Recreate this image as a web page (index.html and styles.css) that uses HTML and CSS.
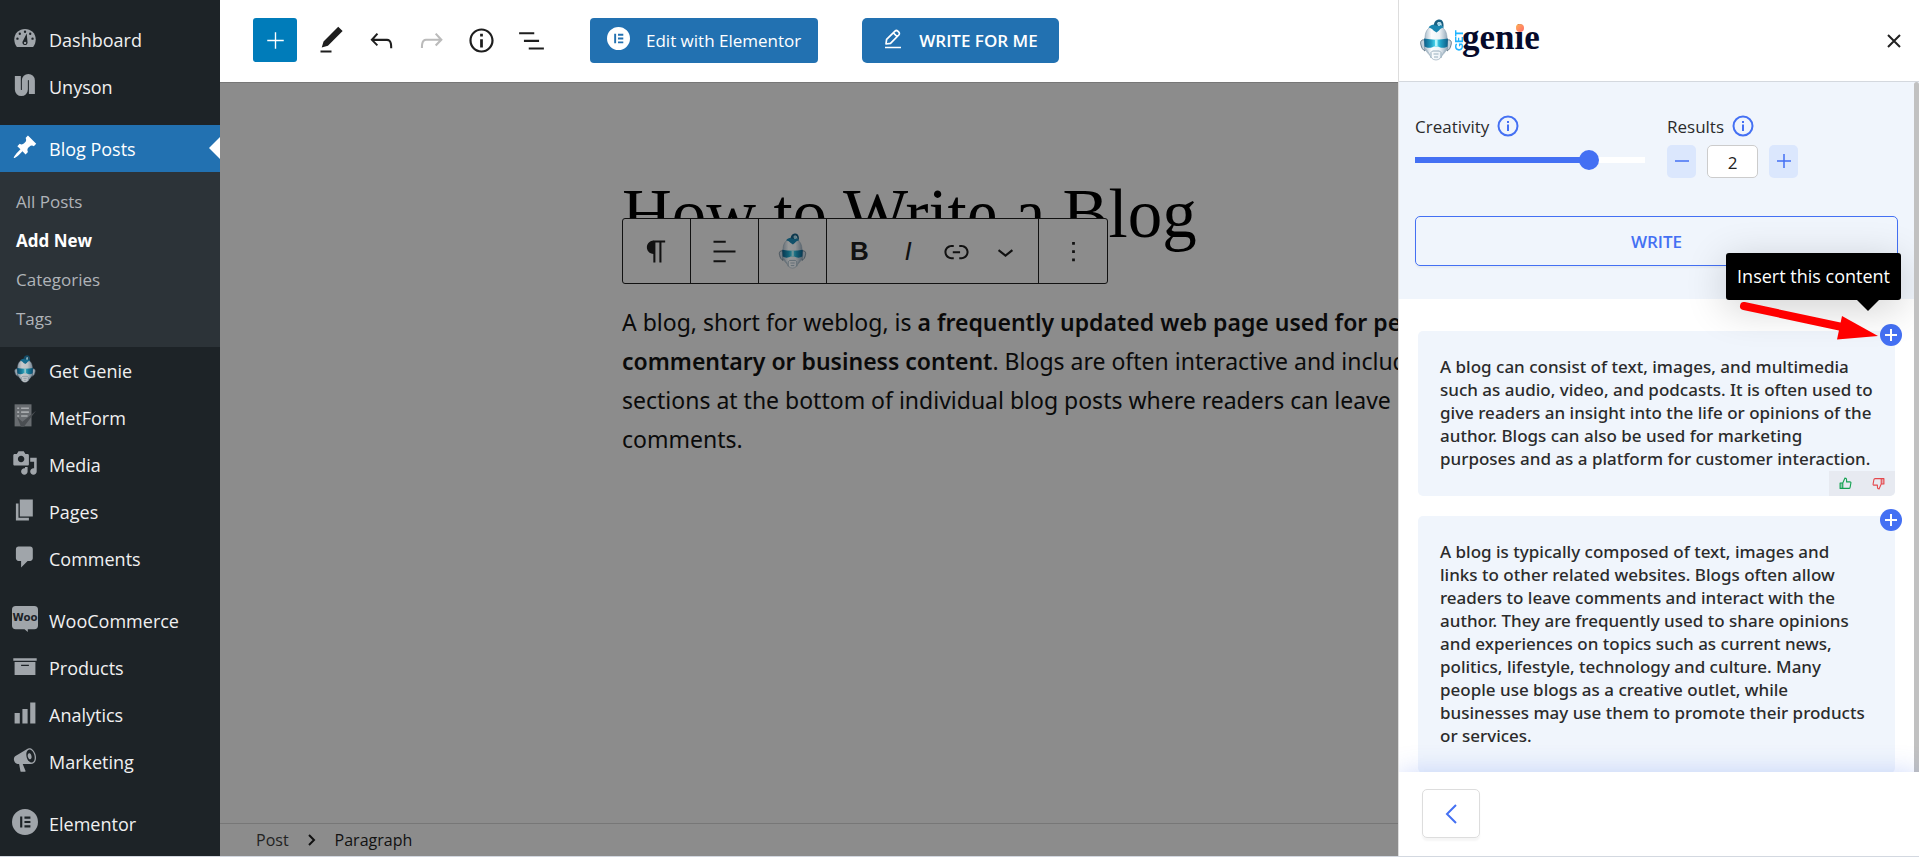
FILE: index.html
```html
<!DOCTYPE html>
<html lang="en">
<head>
<meta charset="utf-8">
<title>Add New Post</title>
<link rel="stylesheet" href="styles.css">
</head>
<body>
<svg class="defs" aria-hidden="true">
  <defs>
    <linearGradient id="visor" x1="0" x2="1" y1="0" y2="0">
      <stop offset="0" stop-color="#0d5c86"/><stop offset=".3" stop-color="#1f9fc4"/><stop offset=".5" stop-color="#4fe0f5"/><stop offset=".7" stop-color="#1f9fc4"/><stop offset="1" stop-color="#0d5c86"/>
    </linearGradient>
    <linearGradient id="skin" x1="0" x2="1" y1="0" y2="0">
      <stop offset="0" stop-color="#a9bccb"/><stop offset=".3" stop-color="#fafcfd"/><stop offset=".65" stop-color="#eef3f7"/><stop offset="1" stop-color="#93a9ba"/>
    </linearGradient>
    <linearGradient id="spark" x1="0" x2="1" y1="0" y2="1">
      <stop offset="0" stop-color="#ffb056"/><stop offset="1" stop-color="#ff6a6a"/>
    </linearGradient>
    <symbol id="head" viewBox="0 0 32 42">
      <path d="M5 21C1 20 0 23 1 26c.5 3 2 5 4 6zM27 21c4-1 5 2 4 5-.5 3-2 5-4 6z" fill="#c3d1dc" stroke="#5d7485" stroke-width=".9"/>
      <path d="M16 7C9 7 5.500 11 5 18l-.5 9c.5 4 2.500 6.500 5 9 1.500 2.500 3 5 6.500 5s5-2.500 6.500-5c2.500-2.500 4.500-5 5-9L27 18C26.500 11 23 7 16 7z" fill="url(#skin)" stroke="#8ba0b0" stroke-width=".6"/>
      <path d="M8.500 8.500C10 6 13 5.500 16 5.500s6.500.5 8 3c-3 .5-4 1.500-5 3l-2.500 2-3-2c-1-1.500-2.500-2.500-5-3z" fill="#1a86b0"/>
      <path d="M14 6C14 2 17 .5 19.500.5 22.500.5 24 4 23.500 8l-2-1.500C22 4 20.500 3 19 3c-2 0-2 2-1 4z" fill="#175f82"/>
      <path d="M17.500 4.500c1-2 3-1.500 3.500 0l-1 2.500h-2z" fill="#9fd6ea"/>
      <path d="M4 19.500c8 1.500 16 1.500 24 0l-.5 8c-3 2-7 1.500-9.500 0h-4c-2.500 1.500-6.500 2-9.500 0z" fill="url(#visor)"/>
      <path d="M15 20.500h2.500v6.500H15z" fill="#b5f5fb"/>
      <path d="M11 39v-5.500l1.500-1.500h7l1.500 1.500V39M13.500 35h5M14 38h4" fill="none" stroke="#8da5b5" stroke-width=".9"/>
      <path d="M6 30l4 6M26 30l-4 6" stroke="#a3b5c3" stroke-width=".9" fill="none"/>
    </symbol>
    <symbol id="elementor" viewBox="0 0 24 24">
      <path fill-rule="evenodd" fill="currentColor" d="M12 0a12 12 0 1 0 0 24 12 12 0 0 0 0-24zM7.500 7h2v10h-2zM11.500 7h5.500v2h-5.500zM11.500 11h5.500v2h-5.500zM11.500 15h5.500v2h-5.500z"/>
    </symbol>
    <symbol id="info" viewBox="0 0 22 22">
      <circle cx="11" cy="11" r="9.500" fill="none" stroke="currentColor" stroke-width="2"/>
      <path d="M10 9.500h2v6.500h-2zM10 6h2v2h-2z" fill="currentColor"/>
    </symbol>
    <symbol id="thumb" viewBox="0 0 24 24">
      <path d="M2 11h5v10H2z" fill="currentColor" fill-opacity=".4"/>
      <path d="M7 11l4-9c2 0 3 1 3 3v4h6c1.500 0 2.200 1 2 2l-1.500 8c-.2 1.200-1 2-2.200 2H2V11h5zM7 11v10" fill="none" stroke="currentColor" stroke-width="2" stroke-linejoin="round"/>
    </symbol>
  </defs>
</svg>

<div class="app">
  <nav class="sidebar" aria-label="Main menu">
    <ul class="menu">
      <li><a class="item" href="#"><svg class="ico" viewBox="0 0 20 20"><path d="M3.760 17h12.480c1.340-1.630 2.010-3.820 2.010-6 0-4.800-3.800-8-8.250-8s-8.250 3.200-8.250 8c0 2.180.67 4.370 2.010 6z" fill="currentColor"/><g fill="#1d2327"><circle cx="10" cy="5.200" r=".9"/><circle cx="6" cy="6.700" r=".9"/><circle cx="14" cy="6.700" r=".9"/><circle cx="4.200" cy="10.500" r=".9"/><circle cx="15.800" cy="10.500" r=".9"/><path d="M11.300 6.500l.6 6.300a2 2 0 1 1-3.400-.7zM10 12.800a.9.900 0 1 0 .1 0z" fill-rule="evenodd"/></g></svg>Dashboard</a></li>
      <li><a class="item" href="#"><svg class="ico" viewBox="0 0 20 20"><path d="M4.500 3v10.500a2.700 2.700 0 0 0 5.400 0v-7a2.700 2.700 0 0 1 5.400 0V17" fill="none" stroke="currentColor" stroke-width="4.600"/></svg>Unyson</a></li>
      <li class="group"><a class="item current" href="#" aria-current="page"><svg class="ico" viewBox="0 0 20 20"><path fill="currentColor" d="M10.440 3.020l1.820-1.820 6.360 6.350-1.830 1.820c-1.050-.68-2.480-.57-3.410.36l-.75.75c-.92.93-1.040 2.350-.35 3.410l-1.830 1.820-2.410-2.410-2.800 2.790c-.42.42-3.380 2.710-3.800 2.290s1.860-3.390 2.280-3.810l2.790-2.790L4.100 9.360l1.830-1.820c1.050.69 2.480.57 3.400-.36l.75-.75c.93-.92 1.050-2.350.36-3.410z"/></svg>Blog Posts</a>
        <ul class="submenu">
          <li><a href="#">All Posts</a></li>
          <li><a class="active" href="#">Add New</a></li>
          <li><a href="#">Categories</a></li>
          <li><a href="#">Tags</a></li>
        </ul>
      </li>
      <li><a class="item" href="#"><svg class="ico genie-dim"><use href="#head"/></svg>Get Genie</a></li>
      <li><a class="item" href="#"><svg class="ico" viewBox="0 0 20 20"><path d="M2 1h13v17H2z" fill="#686c70"/><path d="M4 4h1.500M7 4h6M4 7h1.500M7 7h6M4 10h1.500M7 10h5" stroke="#a7aaad" stroke-width="1.200"/><path d="M4 11l4 3.500L18.500 6 9 18.500H7z" fill="#4a4e52"/></svg>MetForm</a></li>
      <li><a class="item" href="#"><svg class="ico" viewBox="0 0 20 20"><path fill="currentColor" d="M13 11V4c0-.55-.45-1-1-1h-1.670L9 1H5L3.670 3H2c-.55 0-1 .45-1 1v7c0 .55.45 1 1 1h10c.55 0 1-.45 1-1zM7 4.500c1.380 0 2.500 1.120 2.500 2.500S8.380 9.500 7 9.500 4.500 8.380 4.500 7 5.620 4.500 7 4.500zM14 6h5v10.500c0 1.380-1.120 2.500-2.500 2.500S14 17.880 14 16.500s1.120-2.500 2.500-2.500c.17 0 .34.02.5.050V9h-3V6zm-4 8.050V13h2v3.500c0 1.380-1.120 2.500-2.500 2.500S7 17.880 7 16.500 8.120 14 9.500 14c.17 0 .34.02.5.050z"/></svg>Media</a></li>
      <li><a class="item" href="#"><svg class="ico" viewBox="0 0 20 20"><path fill="currentColor" d="M6 15V2h10v13H6zm-1 1h8v2H3V5h2v11z"/></svg>Pages</a></li>
      <li><a class="item" href="#"><svg class="ico" viewBox="0 0 20 20"><path fill="currentColor" d="M5 2h9c1.100 0 2 .9 2 2v7c0 1.100-.9 2-2 2h-2l-5 5v-5H5c-1.100 0-2-.9-2-2V4c0-1.100.9-2 2-2z"/></svg>Comments</a></li>
      <li class="group"><a class="item" href="#"><svg class="ico woo" viewBox="0 0 28 28"><path fill="currentColor" d="M4 0h20a4 4 0 0 1 4 4v17a4 4 0 0 1-4 4h-7v3l-3.500-3H4a4 4 0 0 1-4-4V4a4 4 0 0 1 4-4z"/><text x="14" y="16.500" class="woo-text">Woo</text></svg>WooCommerce</a></li>
      <li><a class="item" href="#"><svg class="ico" viewBox="0 0 20 20"><path fill="currentColor" d="M19 4v2H1V4h18zM2 7h16v10H2V7zm11 3V9H7v1h6z"/></svg>Products</a></li>
      <li><a class="item" href="#"><svg class="ico" viewBox="0 0 20 20"><path fill="currentColor" d="M18 18V2h-4v16h4zm-6 0V7H8v11h4zm-10 0h4v-8H2v8z"/></svg>Analytics</a></li>
      <li><a class="item" href="#"><svg class="ico" viewBox="0 0 20 20"><path fill="currentColor" d="M18.150 5.940c.46 1.620.38 3.220-.02 4.480-.42 1.280-1.260 2.180-2.300 2.480-.16.06-.26.06-.4.06-.06.02-.12.02-.18.02-.06.02-.14.02-.22.02h-6.800l2.220 5.500c.02.14-.06.26-.14.34-.08.1-.24.16-.34.16H6.950c-.1 0-.26-.06-.34-.16-.08-.08-.16-.2-.14-.34l-1-5.500H4.250l-.02-.02c-.5.06-1.080-.18-1.540-.62s-.88-1.080-1.060-1.880c-.24-.8-.2-1.560-.02-2.200.18-.62.58-1.080 1.060-1.300l.02-.02 9-5.400c.1-.06.18-.1.24-.16.06-.04.14-.08.24-.12.16-.08.28-.12.5-.18 1.040-.3 2.240.1 3.220.98s1.840 2.240 2.260 3.860zm-2.580 5.980h-.02c.4-.1.74-.34 1.040-.7.58-.7.86-1.760.86-3.040 0-.64-.1-1.300-.28-1.980-.34-1.360-1.020-2.500-1.780-3.240s-1.680-1.100-2.460-.88c-.82.22-1.400.96-1.700 2-.32 1.040-.28 2.360.06 3.720.38 1.360 1 2.500 1.800 3.240.78.74 1.620 1.100 2.480.88zm-2.540-7.080c.22-.04.42-.02.62.04.38.16.76.48 1.020 1s.42 1.200.42 1.780c0 .3-.04.56-.12.8-.18.48-.44.84-.86.94-.34.1-.8-.06-1.140-.4s-.64-.86-.78-1.500c-.18-.62-.12-1.240.02-1.720s.48-.84.82-.94z"/></svg>Marketing</a></li>
      <li class="group"><a class="item" href="#"><svg class="ico"><use href="#elementor"/></svg>Elementor</a></li>
    </ul>
  </nav>

  <main class="editor">
    <header class="topbar">
      <button class="add-block" aria-label="Add block"><svg viewBox="0 0 24 24"><path d="M11.500 12.500V18h1v-5.500H18v-1h-5.500V6h-1v5.500H6v1z"/></svg></button>
      <div class="tools">
        <button class="tool" aria-label="Tools"><svg viewBox="0 0 24 24"><path d="M20.100 5.100L16.900 2 6.200 12.700l-1.300 4.400 4.500-1.300L20.100 5.100zM4 20.800h8v-1.500H4v1.500z"/></svg></button>
        <button class="tool" aria-label="Undo"><svg viewBox="0 0 24 24"><path d="M18.300 11.700c-.6-.6-1.400-.9-2.300-.9H6.700l2.900-3.300-1.100-1-4.500 5L8.500 16l1-1-2.700-2.700H16c.5 0 .9.2 1.300.5 1 1 1 3.400 1 4.500v.3h1.500v-.2c0-1.500 0-4.300-1.500-5.700z"/></svg></button>
        <button class="tool" aria-label="Redo" disabled><svg viewBox="0 0 24 24"><path d="M15.600 6.500l-1.100 1 2.900 3.300H8c-.9 0-1.700.3-2.300.9-1.400 1.500-1.400 4.200-1.400 5.600v.2h1.500v-.3c0-1.100 0-3.500 1-4.500.3-.3.7-.5 1.300-.5h9.200L14.500 15l1.100 1.100 4.600-4.600-4.600-5z"/></svg></button>
        <button class="tool" aria-label="Details"><svg viewBox="0 0 24 24"><path d="M12 3.200c-4.800 0-8.800 3.900-8.800 8.800 0 4.800 3.900 8.800 8.800 8.800 4.800 0 8.800-3.900 8.800-8.800 0-4.800-4-8.800-8.800-8.800zm0 16c-4 0-7.200-3.300-7.200-7.200C4.800 8 8 4.800 12 4.800s7.200 3.300 7.200 7.200c0 4-3.200 7.200-7.200 7.200zM11 17h2v-6h-2v6zm0-8h2V7h-2v2z"/></svg></button>
        <button class="tool" aria-label="List view"><svg viewBox="0 0 24 24"><path d="M3 6h11v1.500H3V6zm3.500 5.500h11V13h-11v-1.500zM21 17H10v1.500h11V17z"/></svg></button>
      </div>
      <button class="primary"><svg class="el-logo"><use href="#elementor"/></svg>Edit with Elementor</button>
      <button class="primary write-me"><svg class="pen" viewBox="0 0 20 20"><path d="M3 15l.6-4.600L12 2.200c.8-.8 2-.8 2.800 0l1 1c.8.8.8 2 0 2.800l-8.300 8.400zM10.500 4l3.600 3.600M2 18.500h16" fill="none" stroke="currentColor" stroke-width="1.700" stroke-linejoin="round"/></svg>WRITE FOR ME</button>
    </header>

    <section class="canvas">
      <article class="post">
        <h1 class="title">How to Write a Blog</h1>
        <div class="block-bar" role="toolbar" aria-label="Block tools">
          <div class="seg"><button aria-label="Paragraph"><svg viewBox="0 0 24 24"><path d="M18.300 4H9.900v-.1l-.9.200c-2.300.4-4 2.400-4 4.800s1.700 4.400 4 4.800l.7.1V20h1.500V5.500h2.900V20h1.500V5.500h2.700V4z"/></svg></button></div>
          <div class="seg"><button aria-label="Align"><svg viewBox="0 0 24 24"><path d="M4 19.800h8.900v-1.500H4v1.500zm8.900-15.600H4v1.500h8.900V4.200zm-8.900 7v1.500h16v-1.500H4z"/></svg></button></div>
          <div class="seg"><button aria-label="Genie"><svg class="genie-shade"><use href="#head"/></svg></button></div>
          <div class="seg wide">
            <button class="bold">B</button>
            <button class="italic">I</button>
            <button aria-label="Link"><svg viewBox="0 0 24 24"><path d="M15.600 7.200H14v1.500h1.600c2 0 3.700 1.700 3.700 3.700s-1.700 3.700-3.700 3.700H14v1.500h1.600c2.800 0 5.200-2.300 5.200-5.200 0-2.900-2.300-5.200-5.200-5.200zM4.700 12.400c0-2 1.700-3.700 3.700-3.700H10V7.200H8.400c-2.900 0-5.200 2.300-5.200 5.200 0 2.900 2.300 5.200 5.200 5.200H10v-1.500H8.400c-2 0-3.700-1.700-3.700-3.700zm4.600.9h5.300v-1.500H9.300v1.500z"/></svg></button>
            <button aria-label="More formatting"><svg viewBox="0 0 24 24"><path d="M17.500 11.600L12 16l-5.500-4.400.9-1.200L12 14l4.500-3.600 1 1.200z"/></svg></button>
          </div>
          <div class="seg"><button aria-label="Options"><svg viewBox="0 0 24 24"><path d="M13 19h-2v-2h2v2zm0-6h-2v-2h2v2zm0-6h-2V5h2v2z"/></svg></button></div>
        </div>
        <p class="body-text">A blog, short for weblog, is <strong>a frequently updated web page used for personal<br>commentary or business content</strong>. Blogs are often interactive and include<br>sections at the bottom of individual blog posts where readers can leave<br>comments.</p>
      </article>
    </section>

    <footer class="crumbs"><a href="#">Post</a><svg viewBox="0 0 10 12"><path d="M2 1l5 5-5 5" fill="none" stroke="#111" stroke-width="2"/></svg><a class="here" href="#">Paragraph</a></footer>
  </main>

  <aside class="panel">
    <header class="panel-head">
      <div class="logo"><svg class="logo-head"><use href="#head"/></svg><span class="get">GET</span><span class="genie">gen<span class="eye">i<svg viewBox="0 0 8 8"><circle cx="4" cy="4" r="4" fill="url(#spark)"/></svg></span>e</span></div>
      <button class="close" aria-label="Close"><svg viewBox="0 0 14 14"><path d="M1 1l12 12M13 1L1 13" stroke="#222" stroke-width="2"/></svg></button>
    </header>

    <div class="panel-body">
      <section class="options">
        <div class="fields">
          <div class="field creativity">
            <div class="label-row"><label for="creativity">Creativity</label><svg class="info"><use href="#info"/></svg></div>
            <input class="slider" id="creativity" type="range" min="0" max="100" value="78">
          </div>
          <div class="field">
            <div class="label-row"><label for="results">Results</label><svg class="info"><use href="#info"/></svg></div>
            <div class="stepper">
              <button class="step" aria-label="Fewer"><svg viewBox="0 0 14 14"><path d="M0 7h14"/></svg></button>
              <input class="count" id="results" type="text" value="2">
              <button class="step" aria-label="More"><svg viewBox="0 0 14 14"><path d="M0 7h14M7 0v14"/></svg></button>
            </div>
          </div>
        </div>
        <button class="write">WRITE</button>
      </section>

      <section class="results">
        <article class="card">
          <button class="insert" aria-label="Insert this content"><svg viewBox="0 0 12 12"><path d="M0 6h12M6 0v12"/></svg></button>
          <div class="tooltip" role="tooltip">Insert this content</div>
          <svg class="arrow" viewBox="0 0 142 42"><path d="M8 10l98 21" stroke="#f00" stroke-width="8" stroke-linecap="round"/><path d="M106 20l36 20-41 3.500z" fill="#f00"/></svg>
          <p>A blog can consist of text, images, and multimedia<br>such as audio, video, and podcasts. It is often used to<br>give readers an insight into the life or opinions of the<br>author. Blogs can also be used for marketing<br>purposes and as a platform for customer interaction.</p>
          <div class="votes">
            <button class="up" aria-label="Like"><svg><use href="#thumb"/></svg></button>
            <button class="down" aria-label="Dislike"><svg><use href="#thumb"/></svg></button>
          </div>
        </article>
        <article class="card">
          <button class="insert" aria-label="Insert this content"><svg viewBox="0 0 12 12"><path d="M0 6h12M6 0v12"/></svg></button>
          <p>A blog is typically composed of text, images and<br>links to other related websites. Blogs often allow<br>readers to leave comments and interact with the<br>author. They are frequently used to share opinions<br>and experiences on topics such as current news,<br>politics, lifestyle, technology and culture. Many<br>people use blogs as a creative outlet, while<br>businesses may use them to promote their products<br>or services.</p>
        </article>
      </section>
      <div class="scrollbar"></div>
    </div>

    <footer class="panel-foot">
      <button class="back" aria-label="Back"><svg viewBox="0 0 12 20"><path d="M11 1L2 10l9 9" fill="none" stroke="#4470f3" stroke-width="2"/></svg></button>
    </footer>
  </aside>
</div>
</body>
</html>
```
FILE: styles.css
```css
* { box-sizing: border-box; }
body { margin: 0; font-family: "Open Sans", "Noto Sans", sans-serif; overflow: hidden; }
button { font: inherit; padding: 0; border: 0; background: none; color: inherit; display: flex; align-items: center; justify-content: center; }
a { color: inherit; text-decoration: none; }
ul { list-style: none; margin: 0; padding: 0; }
p, h1 { margin: 0; }
svg { display: block; flex: none; }
.defs { position: absolute; width: 0; height: 0; }

.app { position: relative; display: grid; grid-template-columns: 220px 1fr; height: 100vh; border-bottom: 1px solid #d3d8e0; }

/* Sidebar */
.sidebar { background: #1d2327; color: #f0f0f1; padding-top: 16px; overflow: hidden; }
.item { position: relative; display: flex; align-items: center; gap: 11px; height: 47px; padding-left: 12px; font-size: 18px; }
.ico { width: 26px; height: 26px; margin-bottom: 4px; color: #a0a5aa; }
.menu .group { padding-top: 15px; }
.item.current { background: #2271b1; color: #fff; }
.item.current .ico { color: #fff; }
.item.current::after { content: ""; position: absolute; right: 0; top: 12px; border: 11px solid transparent; border-left: 0; border-right-color: #fff; }
.submenu { background: #2c3338; padding: 10px 0 9px; font-size: 17px; }
.submenu a { display: flex; align-items: center; height: 39px; padding-left: 16px; color: #b0b4b8; }
.submenu .active { color: #fff; font-weight: 700; }
.genie-dim { height: 28px; filter: brightness(.8); }
.woo-text { font: bold 11px "DejaVu Sans", sans-serif; fill: #1d2327; text-anchor: middle; }

/* Editor */
.editor { display: flex; flex-direction: column; background: #8c8c8c; min-width: 0; overflow: hidden; }
.topbar { display: flex; align-items: flex-start; height: 83px; padding: 18px 33px; background: #fff; border-bottom: 1px solid #777; }
.add-block { width: 44px; height: 44px; background: #007cba; border-radius: 3px; }
.add-block svg { width: 33px; height: 33px; fill: #fff; }
.tools { display: flex; margin: 0 34px 0 9px; }
.tool { width: 50px; height: 44px; }
.tool svg { width: 33px; height: 33px; fill: #1e1e1e; }
.tool:disabled svg { fill: #bbb; }
.primary { height: 45px; padding: 0 17px; gap: 16px; background: #2271b1; color: #fff; border-radius: 4px; font-size: 17px; }
.el-logo { width: 23px; height: 23px; margin-bottom: 4px; }
.write-me { margin-left: 44px; padding: 0 21px; border-radius: 5px; font-weight: 600; }
.pen { width: 20px; height: 20px; margin-bottom: 4px; }

.canvas { flex: 1; padding: 89px 0 0; min-height: 0; }
.post { width: 895px; max-width: 100%; margin: 0 auto; }
.title { font: 400 69px/84px "Liberation Serif", serif; color: #000; white-space: nowrap; }
.block-bar { position: relative; display: flex; width: 486px; height: 66px; margin-top: -38px; background: #8c8c8c; border: 1px solid #111; border-radius: 3px; }
.seg { display: flex; width: 68px; align-items: center; justify-content: center; border-right: 1px solid #111; }
.seg.wide { flex: 1; padding: 0 8px; }
.seg:last-child { border-right: 0; }
.seg button { flex: 1; color: #111; }
.seg svg { width: 33px; height: 33px; fill: #111; }
.seg .genie-shade { height: 36px; filter: brightness(.6); }
.bold { font: 700 26px/33px "Liberation Sans", sans-serif; }
.italic { font: italic 400 26px/33px "Liberation Sans", sans-serif; }
.body-text { margin-top: 19px; font-family: "Noto Sans", sans-serif; font-size: 23px; line-height: 39px; color: #0a0a0a; white-space: nowrap; }
.body-text strong { font-weight: 600; }
.crumbs { display: flex; align-items: center; height: 33px; padding-left: 36px; gap: 18px; border-top: 1px solid #777; font-size: 16px; color: #222; }
.crumbs svg { width: 10px; height: 12px; }
.crumbs .here { color: #111; }

/* Side panel */
.panel { position: absolute; top: 0; right: 0; bottom: 0; width: 521px; display: flex; flex-direction: column; background: #fff; border-left: 1px solid #ddd; color: #2b2b2b; overflow: hidden; }
.panel-head { display: flex; align-items: center; justify-content: space-between; height: 82px; padding: 0 18px 0 21px; border-bottom: 1px solid #d4d8de; }
.logo { display: flex; align-items: center; }
.logo-head { width: 32px; height: 42px; margin-bottom: 2px; }
.get { margin-left: 3px; writing-mode: vertical-rl; transform: rotate(180deg); font: 900 11px/8px Lato, sans-serif; color: #1fb4ff; }
.genie { margin: 0 0 6px -1px; font: 700 35px/40px "Liberation Serif", serif; color: #060a2b; }
.eye { position: relative; }
.eye svg { position: absolute; left: 1px; top: 6px; width: 8px; height: 8px; }
.close svg { width: 14px; height: 14px; }

.panel-body { position: relative; flex: 1; min-height: 0; overflow: hidden; }
.options { background: #f0f5fc; padding: 32px 21px 33px 16px; }
.fields { display: flex; gap: 22px; }
.creativity { width: 230px; }
.label-row { display: flex; align-items: center; gap: 8px; height: 24px; font-size: 17px; }
.info { width: 22px; height: 22px; color: #4470f3; }
.slider { appearance: none; display: block; width: 100%; height: 20px; margin: 12px 0 0; background: linear-gradient(90deg, #4470f3 76%, #fff 76%) center / 100% 6px no-repeat; border-radius: 3px; }
.slider::-webkit-slider-thumb { appearance: none; width: 20px; height: 20px; border-radius: 50%; background: #4470f3; }
.stepper { display: flex; gap: 11px; margin-top: 7px; }
.step { width: 29px; height: 33px; border-radius: 5px; background: #dbe7fd; }
.step svg { width: 14px; height: 14px; stroke: #4470f3; stroke-width: 1.5; margin-bottom: 2px; }
.count { width: 51px; height: 33px; padding: 2px 0 0; border: 1px solid #ccc; border-radius: 5px; text-align: center; font: inherit; font-size: 17px; color: #222; background: #fff; }
.write { width: 100%; height: 50px; margin-top: 38px; border: 1px solid #4470f3; border-radius: 5px; color: #4470f3; font-size: 17px; font-weight: 600; box-shadow: 0 2px 2px #0000000a; }

.results { display: grid; gap: 20px; padding: 32px 24px 0 19px; }
.card { position: relative; padding: 24px 22px 26px; background: #f0f5fc; border-radius: 5px; font-family: "Noto Sans", sans-serif; font-size: 17px; line-height: 23px; font-weight: 500; white-space: nowrap; }
.insert { position: absolute; top: -7px; right: -7px; width: 22px; height: 22px; border-radius: 50%; background: #4470f3; }
.insert svg { width: 12px; height: 12px; stroke: #fff; stroke-width: 2; }
.tooltip { position: absolute; right: -6px; bottom: calc(100% + 31px); padding: 12px 11px; background: #000; color: #fff; border-radius: 3px; font-family: "Open Sans", sans-serif; font-size: 18px; line-height: 23px; font-weight: 400; box-shadow: 0 8px 40px #00000030; }
.tooltip::after { content: ""; position: absolute; top: 100%; right: 22px; border: 11px solid transparent; border-bottom: 0; border-top-color: #000; }
.arrow { position: absolute; top: -35px; right: 17px; width: 142px; height: 42px; overflow: visible; }
.votes { position: absolute; right: 0; bottom: 0; display: flex; width: 66px; height: 25px; background: #e7eaf1; border-radius: 0 0 5px 0; }
.votes button { flex: 1; }
.votes svg { width: 13px; height: 13px; }
.up { color: #12a150; }
.down { color: #e5484d; }
.down svg { transform: rotate(180deg); }
.scrollbar { position: absolute; top: 0; right: 0; bottom: 0; width: 5px; background: #c1c1c1; border-radius: 3px 3px 0 0; }

.panel-foot { position: relative; height: 84px; padding: 17px 23px; background: #fff; box-shadow: 0 0 24px #4470f340; }
.back { width: 58px; height: 49px; border: 1px solid #ddd; border-radius: 5px; box-shadow: 0 3px 2px #0000000a; }
.back svg { width: 12px; height: 20px; }
```
